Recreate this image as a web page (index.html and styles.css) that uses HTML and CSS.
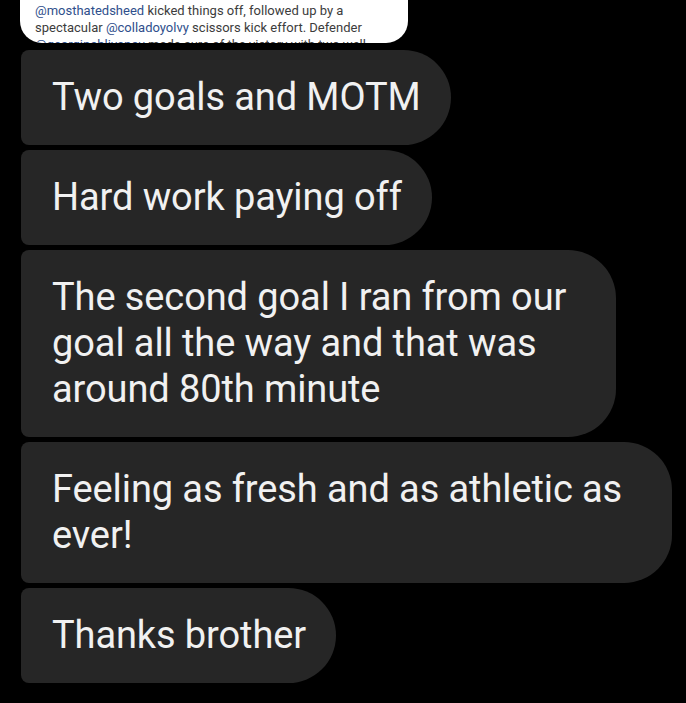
FILE: index.html
```html
<!DOCTYPE html>
<html lang="en">
<head>
    <meta charset="UTF-8">
    <meta name="viewport" content="width=device-width, initial-scale=1.0">
    <title>Messages</title>
    <link rel="stylesheet" href="styles.css">
</head>
<body>
    <div class="thread">
        <div class="shared-card">
            <p class="card-text"><span class="tag">@mosthatedsheed</span> kicked things off, followed up by a spectacular <span class="tag">@colladoyolvy</span> scissors kick effort. Defender <span class="tag">@georginabliyanov</span> made sure of the victory with two well</p>
        </div>
        <ul class="messages">
            <li class="bubble">Two goals and MOTM</li>
            <li class="bubble">Hard work paying off</li>
            <li class="bubble wide">The second goal I ran from our<br>goal all the way and that was<br>around 80th minute</li>
            <li class="bubble wide">Feeling as fresh and as athletic as<br>ever!</li>
            <li class="bubble">Thanks brother</li>
        </ul>
    </div>
</body>
</html>
```

FILE: styles.css
```css
*{margin:0; padding:0; box-sizing:border-box}
html, body{background:#000; height:100%}
body{font-family:Roboto, "Noto Sans", sans-serif; color:#f1f1f1; overflow:hidden}
.thread{padding:0 0 0 20px; display:flex; flex-direction:column; align-items:flex-start}
.shared-card{width:388px; height:43px; background:#fff; border-radius:0 0 22px 22px; padding:2px 0 0 15px; overflow:hidden}
.card-text{font-size:13px; line-height:17px; color:#3c3c3c; width:365px}
.tag{color:#2f4f8c}
.messages{list-style:none; display:flex; flex-direction:column; align-items:flex-start; gap:5px; margin-top:7px; padding-left:1px}
.bubble{background:#262626; font-size:38px; line-height:46px; letter-spacing:-0.1px; padding:24px 30px 25px 31px; border-radius:8px 48px 48px 8px; white-space:nowrap}
.bubble.wide{padding-right:50px}
```
